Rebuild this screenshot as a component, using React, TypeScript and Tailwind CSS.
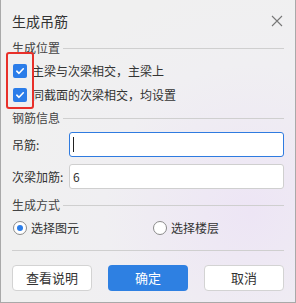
import React from "react";

function SectionHeader({ label }: { label: string }) {
  return (
    <div className="flex h-[12px] items-center">
      <span className="text-[12px] leading-[12px] text-[#444]">{label}</span>
      <div className="ml-[3px] h-px flex-1 bg-[#cfcfcf]" />
    </div>
  );
}

function Check({ label }: { label: string }) {
  return (
    <div className="flex h-[24px] items-center">
      <div className="ml-[1px] flex h-[14px] w-[14px] items-center justify-center rounded-[2px] bg-[#2b7de9]">
        <svg width="10" height="10" viewBox="0 0 10 10">
          <path d="M1.8 5.2 L4 7.3 L8.3 2.8" fill="none" stroke="#fff" strokeWidth="1.6" strokeLinecap="round" strokeLinejoin="round" />
        </svg>
      </div>
      <span className="ml-[5px] text-[12px] leading-[14px] text-[#333]">{label}</span>
    </div>
  );
}

function Radio({ label, checked }: { label: string; checked?: boolean }) {
  return (
    <div className="flex items-center">
      <div className="ml-[1px] flex h-[14px] w-[14px] items-center justify-center rounded-full border border-[#8a8a8a] bg-white">
        {checked && <div className="h-[6px] w-[6px] rounded-full bg-[#2b7de9]" />}
      </div>
      <span className="ml-[4px] text-[12px] leading-[14px] text-[#333]">{label}</span>
    </div>
  );
}

export default function App() {
  return (
    <div
      className="relative flex h-[303px] w-[296px] flex-col border-x border-b border-[#a9a9a9] bg-[radial-gradient(circle_at_85%_70%,#ede5f5_0%,#f0eff2_45%,#f0f0f0_70%)] pl-[11px] pr-[11px]"
      style={{ fontFamily: '"Noto Sans CJK SC", "Noto Sans", sans-serif' }}
    >
      <div className="flex h-[42px] items-center justify-between">
        <span className="text-[14px] leading-[14px] text-[#333]">生成吊筋</span>
        <svg width="12" height="12" viewBox="0 0 12 12" className="mr-[1px]">
          <path d="M1 1 L11 11 M11 1 L1 11" stroke="#777" strokeWidth="1.1" />
        </svg>
      </div>

      <SectionHeader label="生成位置" />
      <div className="mt-[5px] flex flex-col">
        <Check label="主梁与次梁相交，主梁上" />
        <Check label="同截面的次梁相交，均设置" />
      </div>

      <div className="mt-[5px]">
        <SectionHeader label="钢筋信息" />
      </div>
      <div className="mt-[8px] flex h-[25px] items-center">
        <span className="w-[57px] text-[12px] text-[#333]">吊筋:</span>
        <div className="flex h-[25px] flex-1 items-center rounded-[3px] border border-[#2f7be0] bg-white pl-[3px]">
          <div className="h-[15px] w-px bg-[#222]" />
        </div>
      </div>
      <div className="mt-[7px] flex h-[25px] items-center">
        <span className="w-[57px] text-[12px] text-[#333]">次梁加筋:</span>
        <div className="flex h-[25px] flex-1 items-center rounded-[3px] border border-[#cfcfcf] bg-white pl-[3px]">
          <span className="text-[12px] text-[#333]">6</span>
        </div>
      </div>

      <div className="mt-[10px]">
        <SectionHeader label="生成方式" />
      </div>
      <div className="mt-[5px] flex h-[24px] items-center">
        <div className="w-[140px]">
          <Radio label="选择图元" checked />
        </div>
        <Radio label="选择楼层" />
      </div>

      <div className="mt-[10px] h-px bg-[#cfcfcf]" />

      <div className="mt-[14px] flex justify-between">
        <button className="h-[26px] w-[80px] rounded-[4px] border border-[#d3d3d3] bg-white text-[13px] text-[#333]">查看说明</button>
        <button className="h-[26px] w-[80px] rounded-[4px] bg-[#2e80e2] text-[13px] text-white">确定</button>
        <button className="h-[26px] w-[80px] rounded-[4px] border border-[#d3d3d3] bg-white text-[13px] text-[#333]">取消</button>
      </div>

      <div className="pointer-events-none absolute left-[5px] top-[52px] h-[57px] w-[28px] rounded-[3px] border-2 border-[#e8302a]" />
    </div>
  );
}
